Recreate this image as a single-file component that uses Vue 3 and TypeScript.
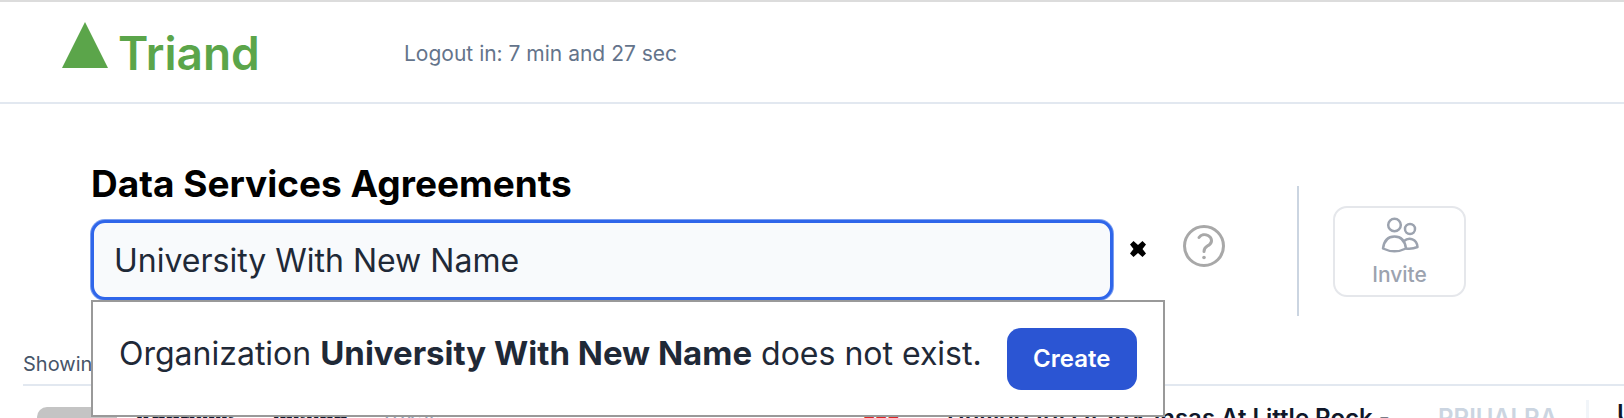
<script setup lang="ts">
import { computed, ref } from 'vue'

const query = ref('University With New Name')
const open = computed(() => query.value.trim().length > 0)

function clear(): void {
  query.value = ''
}
</script>

<template>
  <div class="page">
    <header class="header">
      <a class="brand" href="#">
        <svg class="mark" viewBox="0 0 46 46" aria-hidden="true">
          <path d="M23 0 46 46H0Z" />
        </svg>
        <span>Triand</span>
      </a>
      <p class="session">Logout in: 7 min and 27 sec</p>
    </header>

    <main>
      <section class="toolbar">
        <div class="search">
          <label class="title" for="organization">Data Services Agreements</label>
          <div class="field">
            <input id="organization" v-model="query" type="text" autocomplete="off" spellcheck="false" />
            <div v-if="open" class="popup">
              <p>Organization <strong>{{ query }}</strong> does not exist.</p>
              <button class="create" type="button">Create</button>
            </div>
          </div>
        </div>
        <button class="clear" type="button" aria-label="Clear" @click="clear">
          <svg viewBox="0 0 18 18" aria-hidden="true">
            <path d="M4.5 1 9 5 13.5 1 17 4.5 13.5 9 17 13.5 13.5 17 9 13 4.5 17 1 13.5 4.5 9 1 4.5Z" />
          </svg>
        </button>
        <button class="help" type="button" aria-label="Help">
          <svg viewBox="0 0 42 42" aria-hidden="true">
            <circle cx="21" cy="21" r="19.5" />
            <path d="M16 12.5C18 9.5 22 9 25 10.5C29.5 13 29.5 17.5 26 20C23 22 21 22.5 21 26.5" />
            <circle class="dot" cx="21" cy="32.5" r="1.8" />
          </svg>
        </button>
        <div class="divider"></div>
        <button class="invite" type="button">
          <svg viewBox="0 0 38 36" aria-hidden="true">
            <circle cx="13.5" cy="8" r="6.3" />
            <circle cx="29" cy="12" r="5" />
            <path d="M2 31.5C3 24 7 19.5 13.5 19.5S24 24 25 31.5C18 35 9 35 2 31.5Z" />
            <path d="M23 24C28 19.5 36 22 36.5 30C33 31.5 29 32 25 31.5" />
          </svg>
          <span>Invite</span>
        </button>
      </section>

      <section class="results">
        <p class="count">Showing</p>
        <div class="row">
          <div class="avatar"></div>
          <div class="person"><b>Andrews</b><b>Joseph</b><span>Texas</span></div>
          <div class="state">EEE</div>
          <div class="school">University Of Arkansas At Little Rock -</div>
          <div class="code">PRIUALRA</div>
          <div class="more">U</div>
        </div>
      </section>
    </main>
  </div>
</template>

<style>
body {
  margin: 0;
  overflow: hidden;
}
</style>

<style scoped>
.page {
  height: 100vh;
  overflow: hidden;
  box-sizing: border-box;
  border-top: 2px solid #dcdcdc;
  background: #fff;
  color: #1f2937;
  font-family: Inter, "Liberation Sans", sans-serif;
}
p {
  margin: 0;
}
button {
  padding: 0;
  border: 0;
  background: none;
  font-family: inherit;
  cursor: pointer;
}
svg {
  display: block;
  flex: none;
}
.header {
  display: flex;
  align-items: center;
  height: 100px;
  padding: 0 62px;
  border-bottom: 2px solid #e2e8f0;
}
.brand {
  display: flex;
  align-items: center;
  gap: 10px;
  width: 342px;
  color: #5ba54a;
  font-size: 46px;
  line-height: 60px;
  font-weight: 600;
  text-decoration: none;
}
.brand span {
  padding-top: 2px;
}
.mark {
  width: 46px;
  height: 46px;
  margin-bottom: 14px;
  fill: currentColor;
}
.session {
  padding-top: 4px;
  color: #64748b;
  font-size: 21px;
  line-height: 28px;
}
.toolbar {
  display: flex;
  align-items: flex-end;
  padding: 56px 158px 0 91px;
}
.search {
  flex: 1;
  margin-bottom: 16px;
}
.title {
  display: block;
  margin-bottom: 12px;
  color: #000;
  font-size: 37px;
  line-height: 48px;
  font-weight: 700;
}
.field {
  position: relative;
}
.field input {
  display: block;
  box-sizing: border-box;
  width: 100%;
  height: 80px;
  padding: 0 20px;
  border: 3px solid #2f66ea;
  border-radius: 14px;
  outline: none;
  box-shadow: 0 0 0 1px #7c9ff0;
  background: #f8fafc;
  color: #1f2937;
  font-family: inherit;
  font-size: 32px;
}
.popup {
  position: absolute;
  top: 100%;
  left: 0;
  z-index: 1;
  display: flex;
  align-items: center;
  gap: 25px;
  box-sizing: border-box;
  height: 117px;
  padding: 0 26px;
  border: 2px solid #999;
  background: #fff;
  font-size: 32px;
  line-height: 44px;
  white-space: nowrap;
}
.popup p {
  padding-bottom: 10px;
}
.popup strong {
  font-size: 33px;
}
.create {
  width: 130px;
  height: 62px;
  border-radius: 14px;
  background: #2b55d3;
  color: #fff;
  font-size: 24px;
  font-weight: 600;
}
.clear {
  margin: 0 36px 58px 16px;
}
.clear svg {
  width: 18px;
  height: 18px;
}
.help {
  margin-bottom: 49px;
}
.help svg {
  width: 42px;
  height: 42px;
  fill: none;
  stroke: #a8a8a8;
  stroke-width: 3;
  stroke-linecap: round;
}
.help .dot {
  fill: #a8a8a8;
  stroke: none;
}
.divider {
  width: 2px;
  height: 130px;
  margin: 0 34px 0 72px;
  background: #cbd5e1;
}
.invite {
  display: flex;
  flex-direction: column;
  align-items: center;
  gap: 8px;
  box-sizing: border-box;
  width: 133px;
  height: 91px;
  margin-bottom: 19px;
  padding-top: 9px;
  border: 2px solid #e5e7eb;
  border-radius: 14px;
  color: #9ca3af;
  font-size: 21px;
  line-height: 28px;
  font-weight: 500;
}
.invite svg {
  width: 38px;
  height: 36px;
  fill: none;
  stroke: currentColor;
  stroke-width: 2.5;
  stroke-linejoin: round;
}
.results {
  padding: 34px 0 0 23px;
}
.count {
  padding-bottom: 6px;
  border-bottom: 2px solid #e2e8f0;
  color: #475569;
  font-size: 20px;
  line-height: 28px;
}
.row {
  display: flex;
  align-items: flex-start;
  padding: 14px 0 0 14px;
  color: #0f172a;
  font-size: 24px;
  line-height: 28px;
  font-weight: 600;
  white-space: nowrap;
}
.avatar {
  width: 80px;
  height: 80px;
  margin-top: 7px;
  border-radius: 10px;
  background: #c4c4c4;
}
.person {
  display: flex;
  gap: 32px;
  width: 746px;
  padding: 4px 0 0 17px;
  box-sizing: border-box;
  font-size: 22px;
}
.person span {
  color: #94a3b8;
  font-weight: 400;
}
.state {
  width: 84px;
  padding-top: 10px;
  color: #dc2626;
  font-size: 20px;
}
.school {
  flex: 1;
  padding-top: 4px;
}
.code {
  width: 148px;
  padding-top: 4px;
  color: #cbd5e1;
}
.more {
  width: 7px;
  min-height: 80px;
  padding-left: 28px;
  border-left: 3px solid #f1f5f9;
}
</style>
